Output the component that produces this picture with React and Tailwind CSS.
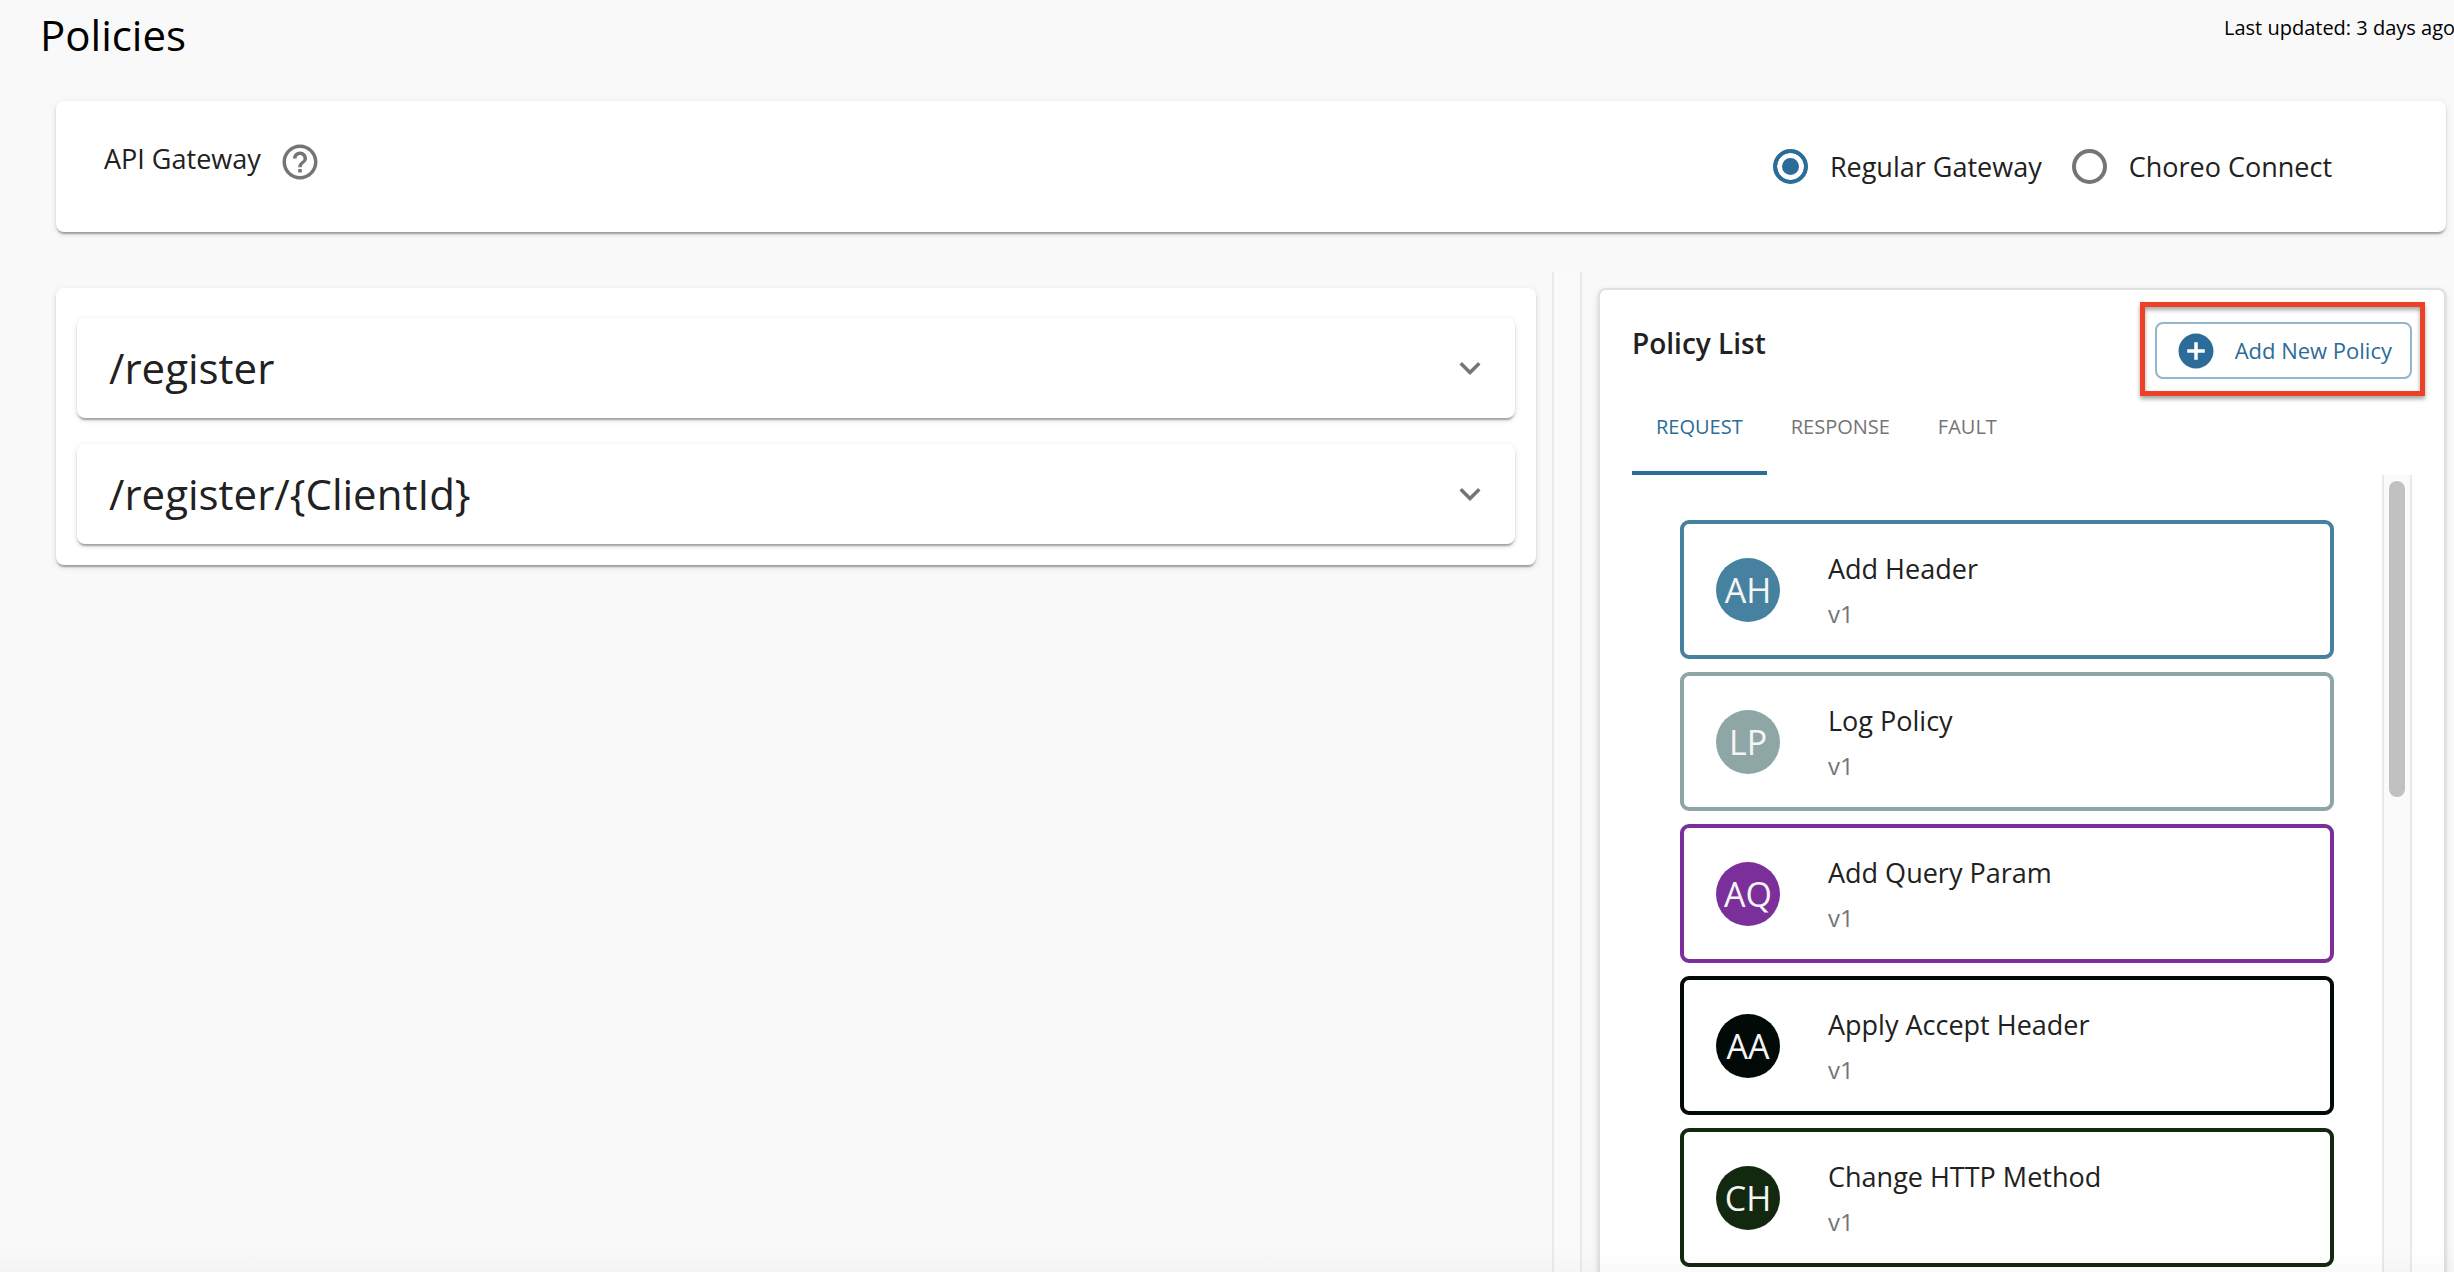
import React from "react";

const policies = [
  { name: "Add Header", version: "v1", initials: "AH", border: "border-[#4682a0]", fill: "bg-[#4682a0]" },
  { name: "Log Policy", version: "v1", initials: "LP", border: "border-[#8fa6a6]", fill: "bg-[#8fa6a6]" },
  { name: "Add Query Param", version: "v1", initials: "AQ", border: "border-[#7a2f9a]", fill: "bg-[#7a2f9a]" },
  { name: "Apply Accept Header", version: "v1", initials: "AA", border: "border-[#020a08]", fill: "bg-[#020a08]" },
  { name: "Change HTTP Method", version: "v1", initials: "CH", border: "border-[#13290f]", fill: "bg-[#13290f]" },
];

const resources = ["/register", "/register/{ClientId}"];

const gateways = ["Regular Gateway", "Choreo Connect"];

const paper =
  "rounded-lg bg-white shadow-[0_4px_2px_-2px_rgba(0,0,0,0.2),0_2px_2px_0_rgba(0,0,0,0.14),0_2px_6px_0_rgba(0,0,0,0.12)]";

function HelpIcon() {
  return (
    <svg viewBox="0 0 24 24" className="size-[42px]" fill="currentColor" aria-hidden="true">
      <path d="M11 18h2v-2h-2v2zm1-16C6.48 2 2 6.48 2 12s4.48 10 10 10 10-4.48 10-10S17.52 2 12 2zm0 18c-4.41 0-8-3.59-8-8s3.59-8 8-8 8 3.59 8 8-3.59 8-8 8zm0-14c-2.21 0-4 1.79-4 4h2c0-1.1.9-2 2-2s2 .9 2 2c0 2-3 1.75-3 5h2c0-2.25 3-2.5 3-5 0-2.21-1.79-4-4-4z" />
    </svg>
  );
}

function ExpandIcon() {
  return (
    <svg viewBox="0 0 24 24" className="size-[42px]" fill="currentColor" aria-hidden="true">
      <path d="M16.59 8.59L12 13.17 7.41 8.59 6 10l6 6 6-6z" />
    </svg>
  );
}

function AddCircleIcon() {
  return (
    <svg viewBox="0 0 24 24" className="size-[42px]" fill="currentColor" aria-hidden="true">
      <path d="M12 2C6.48 2 2 6.48 2 12s4.48 10 10 10 10-4.48 10-10S17.52 2 12 2zm5 11h-4v4h-2v-4H7v-2h4V7h2v4h4v2z" />
    </svg>
  );
}

function GatewayCard() {
  return (
    <section className={`mr-2 ml-14 flex h-[131px] items-center justify-between pr-[114px] pl-12 ${paper}`}>
      <div className="flex items-center gap-[18px] pb-2.5 text-[#757575]">
        <h2 className="pb-1.5 text-[27px] leading-[42px] text-[#212121]">API Gateway</h2>
        <button type="button" aria-label="About API Gateway">
          <HelpIcon />
        </button>
      </div>
      <div role="radiogroup" aria-label="API Gateway" className="flex items-center gap-[30px]">
        {gateways.map((name, i) => (
          <label key={name} className="flex items-center gap-[22px] text-[27px] leading-[42px]">
            <input
              type="radio"
              name="gateway"
              defaultChecked={i === 0}
              className="size-[35px] appearance-none rounded-full border-4 border-[#757575] checked:border-[#2b6c98] checked:bg-[#2b6c98] checked:shadow-[inset_0_0_0_5px_white]"
            />
            {name}
          </label>
        ))}
      </div>
    </section>
  );
}

function ScrollTrack({ children }) {
  return <div className="border-x-2 border-[#e9e9e9] bg-[#fafafa]">{children}</div>;
}

function PolicyCard({ policy }) {
  return (
    <li className={`flex h-[139px] items-center gap-12 rounded-[9px] border-4 bg-white pl-8 ${policy.border}`}>
      <div
        className={`flex size-16 shrink-0 items-center justify-center rounded-full text-[34px] leading-none text-[#f5f5f5] ${policy.fill}`}
      >
        {policy.initials}
      </div>
      <div>
        <p className="text-[27px] leading-[48px]">{policy.name}</p>
        <p className="text-[24px] leading-[42px] text-[#757575]">{policy.version}</p>
      </div>
    </li>
  );
}

function PolicyList() {
  return (
    <section className="flex min-h-0 flex-1 flex-col rounded-t-lg border-2 border-b-0 border-[#e0e0e0] bg-white px-8 pt-8 shadow-[0_2px_2px_0_rgba(0,0,0,0.1),0_2px_6px_0_rgba(0,0,0,0.12)]">
      <div className="flex items-start justify-between">
        <h2 className="text-[28px] leading-[42px] font-semibold">Policy List</h2>
        <div className="relative">
          <button
            type="button"
            className="flex h-[57px] items-center gap-[18px] rounded-lg border-2 border-[#95b5cb] px-[18px] text-[22px] text-[#2b6c98]"
          >
            <AddCircleIcon />
            Add New Policy
          </button>
          <div className="pointer-events-none absolute -top-5 -right-[13px] -bottom-[17px] -left-[15px] border-[5px] border-[#ec4127] shadow-[0_3px_4px_0_rgba(0,0,0,0.35),inset_0_3px_4px_0_rgba(0,0,0,0.35)]" />
        </div>
      </div>
      <div role="tablist" className="flex text-[20px] text-[#757575]">
        <button
          type="button"
          role="tab"
          aria-selected="true"
          className="h-24 border-y-4 border-t-transparent border-b-[#2b6c98] px-6 text-[#2b6c98]"
        >
          REQUEST
        </button>
        <button type="button" role="tab" aria-selected="false" className="h-24 px-6">
          RESPONSE
        </button>
        <button type="button" role="tab" aria-selected="false" className="h-24 px-6">
          FAULT
        </button>
      </div>
      <div className="grid min-h-0 flex-1 grid-cols-[1fr_30px]">
        <ul className="flex flex-col gap-[13px] overflow-hidden px-12 pt-[45px]">
          {policies.map((policy) => (
            <PolicyCard key={policy.name} policy={policy} />
          ))}
        </ul>
        <ScrollTrack>
          <div className="mx-auto mt-1.5 h-[316px] w-4 rounded-full bg-[#c1c1c1]" />
        </ScrollTrack>
      </div>
    </section>
  );
}

export default function App() {
  return (
    <main className="relative flex h-screen flex-col overflow-hidden bg-[#f9f9f9] font-['Open_Sans',sans-serif] text-[#212121]">
      <header className="flex h-[101px] shrink-0 justify-between pl-10 text-black">
        <h1 className="pt-1 text-[42px] leading-[62px]">Policies</h1>
        <p className="w-[230px] pt-3 text-[20px] leading-8 whitespace-nowrap">Last updated: 3 days ago</p>
      </header>
      <GatewayCard />
      <div className="mt-10 mr-2 ml-14 grid min-h-0 flex-1 grid-cols-[1480fr_30px_848fr] gap-x-4">
        <div className="pt-4">
          <section className={`flex flex-col gap-[26px] px-[21px] pt-[30px] pb-[21px] ${paper}`}>
            {resources.map((path) => (
              <button
                key={path}
                type="button"
                aria-expanded="false"
                className={`flex h-[100px] items-center justify-between pr-6 pl-8 text-left text-[42px] leading-[64px] ${paper}`}
              >
                {path}
                <span className="text-[#757575]">
                  <ExpandIcon />
                </span>
              </button>
            ))}
          </section>
        </div>
        <ScrollTrack />
        <div className="flex min-h-0 flex-col pt-4">
          <PolicyList />
        </div>
      </div>
      <div className="pointer-events-none absolute inset-x-0 bottom-0 h-6 bg-gradient-to-t from-black/2 to-transparent" />
    </main>
  );
}
